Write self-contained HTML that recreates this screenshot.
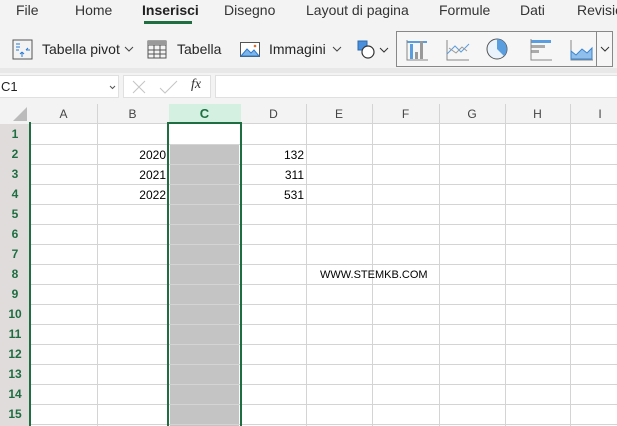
<!DOCTYPE html><html><head><style>
*{margin:0;padding:0;box-sizing:border-box}
html,body{width:617px;height:426px;overflow:hidden}
body{background:#f3f3f3;font-family:"Liberation Sans",sans-serif;position:relative}
.a{position:absolute}
.tab{position:absolute;top:2px;font-size:14px;color:#333}
.rb{position:absolute;top:41px;font-size:14px;color:#252525}
.vl{position:absolute;top:104px;bottom:0;width:1px;background:#d4d4d4}
.hl{position:absolute;left:30px;right:0;height:1px;background:#d4d4d4}
.rh{position:absolute;left:0;width:30px;height:20px;font-size:12px;font-weight:bold;color:#1e6e42;text-align:center;line-height:20px}
.ch{position:absolute;top:104px;height:20px;font-size:12px;color:#444;text-align:center;line-height:20px}
.n{position:absolute;font-size:12px;color:#000;text-align:right;line-height:20px}
.cv{position:absolute}
</style></head><body>
<div class="tab" style="left:16px">File</div>
<div class="tab" style="left:75px">Home</div>
<div class="tab" style="left:142px;font-weight:bold;color:#222">Inserisci</div>
<div class="a" style="left:144px;top:21px;width:48px;height:3px;background:#1e6e42"></div>
<div class="tab" style="left:224px">Disegno</div>
<div class="tab" style="left:306px">Layout di pagina</div>
<div class="tab" style="left:439px">Formule</div>
<div class="tab" style="left:520px">Dati</div>
<div class="tab" style="left:577px">Revisio</div>

<svg class="a" style="left:12px;top:39px" width="22" height="22"><rect x="1" y="1" width="19" height="19" fill="none" stroke="#555"/><path d="M4 5h4M4 8h4M4 11h3M10 13v5M10 13l-2 2M10 13l2 2M14 11h4M14 11l2-2" stroke="#2a7ad2" fill="none"/></svg>
<div class="rb" style="left:42px">Tabella pivot</div>
<svg class="cv" style="left:124px;top:46px" width="10" height="6"><path d="M1 1l4 4 4-4" stroke="#444" fill="none"/></svg>
<svg class="a" style="left:147px;top:40px" width="20" height="19"><rect x="1" y="1" width="18" height="17" fill="none" stroke="#555"/><path d="M1 5h18M1 10h18M1 14h18M7 5v13M13 5v13" stroke="#555"/><rect x="1" y="1" width="18" height="4" fill="#999"/></svg>
<div class="rb" style="left:177px">Tabella</div>
<svg class="a" style="left:240px;top:42px" width="20" height="15"><rect x="0.5" y="0.5" width="19" height="14" fill="#fff" stroke="#555"/><path d="M1 14l6-7 4 4 3-3 5 6z" fill="#7fb5e6" stroke="#2a7ad2"/><circle cx="15" cy="4" r="1.3" fill="#e06b2a"/></svg>
<div class="rb" style="left:269px">Immagini</div>
<svg class="cv" style="left:332px;top:46px" width="10" height="6"><path d="M1 1l4 4 4-4" stroke="#444" fill="none"/></svg>
<svg class="a" style="left:357px;top:40px" width="36" height="20"><rect x="1" y="1" width="9" height="9" fill="#4a8fdc" stroke="#2a6ab0"/><circle cx="11" cy="12" r="6" fill="#fff" stroke="#333" stroke-width="1.2"/><path d="M23 8l4 4 4-4" stroke="#333" fill="none"/></svg>
<div class="a" style="left:396px;top:31px;width:217px;height:36px;border:1px solid #888;background:#f6f6f6"></div>
<div class="a" style="left:596px;top:31px;width:1px;height:36px;background:#888"></div>
<svg class="cv" style="left:600px;top:46px" width="10" height="6"><path d="M1 1l4 4 4-4" stroke="#333" fill="none"/></svg>
<svg class="a" style="left:405px;top:36px" width="200" height="26">
<rect x="2" y="5" width="20" height="2" fill="#5a9ee0"/>
<path d="M2 4v20h21" stroke="#888" fill="none"/>
<rect x="5" y="8" width="3" height="15" fill="#5a9ee0"/><rect x="10" y="16" width="3" height="7" fill="#999"/><rect x="15" y="5" width="3" height="18" fill="#999"/>
<path d="M42 4v20h22" stroke="#888" fill="none"/><path d="M42 18l8-8 6 6 8-8" stroke="#5a9ee0" fill="none"/><path d="M44 12l7 5 6-6 5 4" stroke="#999" fill="none"/>
<circle cx="92" cy="13" r="10" fill="#eaf3fb" stroke="#555"/><path d="M92 13V3a10 10 0 0 1 7 17z" fill="#5a9ee0"/>
<rect x="126" y="4" width="20" height="3" fill="#5a9ee0"/><rect x="126" y="9" width="14" height="3" fill="#aaa"/><rect x="126" y="14" width="8" height="3" fill="#aaa"/><path d="M126 3v21h21" stroke="#888" fill="none"/>
<path d="M166 4v20h22" stroke="#888" fill="none"/><path d="M166 15l5 4 6-6 5 4 5-5v11h-21z" fill="#8fbfea" stroke="#3a84d0"/>
</svg>
<div class="a" style="left:0;top:68px;width:617px;height:5px;background:#e8e8e8"></div>

<div class="a" style="left:-2px;top:75px;width:121px;height:23px;background:#fff;border:1px solid #e0e0e0"></div>
<div class="a" style="left:1px;top:79px;font-size:13px;color:#222">C1</div>
<svg class="cv" style="left:109px;top:85px" width="7" height="5"><path d="M1 1l2.5 2.5 2.5-2.5" stroke="#555" fill="none"/></svg>
<div class="a" style="left:123px;top:75px;width:88px;height:23px;background:#fff;border:1px solid #e0e0e0"></div>
<svg class="a" style="left:132px;top:80px" width="50" height="14"><path d="M1 1l12 12M13 1l-12 12M28 8l5 5 12-12" stroke="#c4c4c4" fill="none"/></svg>
<div class="a" style="left:191px;top:77px;font-size:14px;font-style:italic;font-family:'Liberation Serif',serif;color:#333">fx</div>
<div class="a" style="left:215px;top:75px;width:410px;height:23px;background:#fff;border:1px solid #e0e0e0"></div>

<div class="a" style="left:0;top:100px;width:617px;height:326px;background:#fff"></div>
<div class="a" style="left:0;top:100px;width:617px;height:24px;background:#f3f3f3"></div>
<div class="a" style="left:0;top:124px;width:30px;height:302px;background:#e1dcdc"></div>
<svg class="a" style="left:12px;top:106px" width="16" height="16"><path d="M15 1V15H1z" fill="#bbb"/></svg>
<div class="a" style="left:169px;top:104px;width:72px;height:20px;background:#d3f0e0"></div>
<div class="a" style="left:30px;top:123px;width:587px;height:1px;background:#d4d4d4"></div>
<div class="vl" style="left:97px"></div><div class="vl" style="left:306px"></div><div class="vl" style="left:372px"></div><div class="vl" style="left:439px"></div><div class="vl" style="left:505px"></div><div class="vl" style="left:570px"></div>
<div class="ch" style="left:30px;width:67px">A</div><div class="ch" style="left:97px;width:71px">B</div>
<div class="ch" style="left:168px;width:73px;font-weight:bold;color:#1e6e42;font-size:13px">C</div>
<div class="ch" style="left:241px;width:65px">D</div><div class="ch" style="left:306px;width:66px">E</div><div class="ch" style="left:372px;width:67px">F</div><div class="ch" style="left:439px;width:66px">G</div><div class="ch" style="left:505px;width:65px">H</div><div class="ch" style="left:570px;width:60px">I</div>

<div class="a" style="left:170px;top:144px;width:69px;height:282px;background:#c4c4c4"></div>
<div class="hl" style="top:144px"></div><div class="hl" style="top:164px"></div><div class="hl" style="top:184px"></div><div class="hl" style="top:204px"></div><div class="hl" style="top:224px"></div><div class="hl" style="top:244px"></div><div class="hl" style="top:264px"></div><div class="hl" style="top:284px"></div><div class="hl" style="top:304px"></div><div class="hl" style="top:324px"></div><div class="hl" style="top:344px"></div><div class="hl" style="top:364px"></div><div class="hl" style="top:384px"></div><div class="hl" style="top:404px"></div><div class="hl" style="top:424px"></div>
<div class="a" style="left:29px;top:122px;width:2px;height:304px;background:#1e6e42"></div>
<div class="a" style="left:167px;top:122px;width:75px;height:304px;border:2px solid #1e6e42;border-bottom:none"></div>

<div class="rh" style="top:124px">1</div><div class="rh" style="top:144px">2</div><div class="rh" style="top:164px">3</div><div class="rh" style="top:184px">4</div><div class="rh" style="top:204px">5</div><div class="rh" style="top:224px">6</div><div class="rh" style="top:244px">7</div><div class="rh" style="top:264px">8</div><div class="rh" style="top:284px">9</div><div class="rh" style="top:304px">10</div><div class="rh" style="top:324px">11</div><div class="rh" style="top:344px">12</div><div class="rh" style="top:364px">13</div><div class="rh" style="top:384px">14</div><div class="rh" style="top:404px">15</div>

<div class="n" style="left:100px;width:66px;top:145px">2020</div>
<div class="n" style="left:100px;width:66px;top:165px">2021</div>
<div class="n" style="left:100px;width:66px;top:185px">2022</div>
<div class="n" style="left:240px;width:64px;top:145px">132</div>
<div class="n" style="left:240px;width:64px;top:165px">311</div>
<div class="n" style="left:240px;width:64px;top:185px">531</div>
<div class="a" style="left:320px;top:265px;font-size:11px;line-height:20px;color:#000">WWW.STEMKB.COM</div>
</body></html>
